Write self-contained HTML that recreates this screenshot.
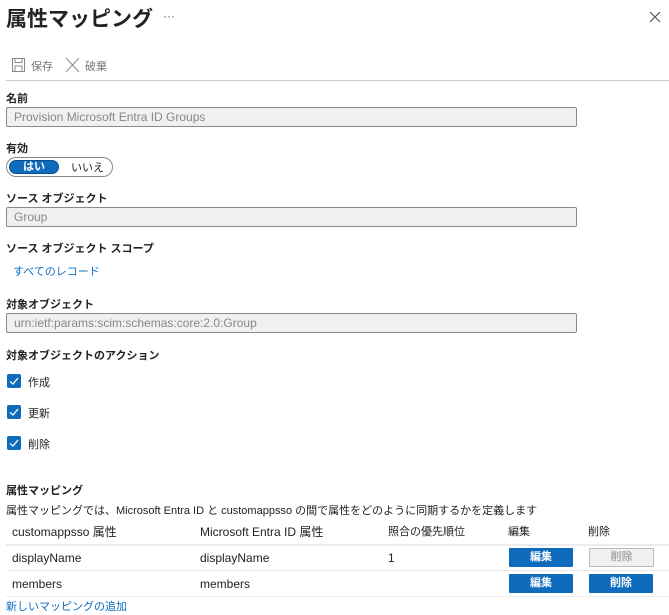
<!DOCTYPE html>
<html><head><meta charset="utf-8"><style>
body{margin:0;width:669px;height:615px;background:#fff;font-family:"Liberation Sans","Noto Sans CJK JP",sans-serif;color:#222;position:relative;overflow:hidden}
.a{position:absolute;white-space:nowrap}
.lab{font-size:11px;font-weight:bold;color:#222}
.inp{position:absolute;left:6px;width:562px;height:18px;border:1px solid #8a8a8a;background:#f0f0f0;border-radius:2px;font-size:12px;color:#888;line-height:18px;padding-left:7px;box-sizing:content-box}
.cb{position:absolute;left:7px;width:14px;height:14px;background:#0f6cbd;border-radius:2px}
.cb svg{display:block}
.btn{position:absolute;width:64px;height:19px;background:#0f6cbd;color:#fff;font-size:11px;font-weight:bold;text-align:center;line-height:19px;border-radius:1px}
.hl{position:absolute;left:6px;width:663px;height:1px;background:#ebebeb}
.t{font-size:12px}
</style></head><body>
<div class="a" style="left:6px;top:3px;font-size:21px;font-weight:bold">属性マッピング</div>
<div class="a" style="left:163px;top:9px;font-size:12px;color:#666">···</div>
<svg class="a" style="left:649px;top:11px" width="12" height="12"><path d="M1 1L11 11M11 1L1 11" stroke="#555" stroke-width="1.2"/></svg>
<svg class="a" style="left:12px;top:58px" width="13" height="14"><rect x="0.5" y="0.5" width="12" height="13" fill="none" stroke="#888"/><rect x="3" y="0.5" width="7" height="4" fill="none" stroke="#888"/><rect x="3" y="8" width="7" height="5.5" fill="none" stroke="#888"/></svg>
<div class="a" style="left:31px;top:58px;font-size:11px;color:#777">保存</div>
<svg class="a" style="left:66px;top:58px" width="13" height="14"><path d="M0 0L13 14M13 0L0 14" stroke="#888" stroke-width="1"/></svg>
<div class="a" style="left:85px;top:58px;font-size:11px;color:#777">破棄</div>
<div class="a" style="left:6px;top:80px;width:663px;height:1px;background:#ccc"></div>
<div class="a lab" style="left:6px;top:90px">名前</div>
<div class="inp" style="top:107px">Provision Microsoft Entra ID Groups</div>
<div class="a lab" style="left:6px;top:140px">有効</div>
<div class="a" style="left:6px;top:157px;width:105px;height:18px;border:1px solid #888;border-radius:10px"></div>
<div class="a" style="left:9px;top:160px;width:48px;height:12px;background:#0f6cbd;border:1px solid #0b4d8a;border-radius:7px;color:#fff;font-size:11px;font-weight:bold;text-align:center;line-height:12px">はい</div>
<div class="a" style="left:71px;top:159px;font-size:11px">いいえ</div>
<div class="a lab" style="left:6px;top:190px">ソース オブジェクト</div>
<div class="inp" style="top:207px">Group</div>
<div class="a lab" style="left:6px;top:240px">ソース オブジェクト スコープ</div>
<div class="a" style="left:13px;top:263px;font-size:11px;color:#0f6cbd">すべてのレコード</div>
<div class="a lab" style="left:6px;top:296px">対象オブジェクト</div>
<div class="inp" style="top:313px">urn:ietf:params:scim:schemas:core:2.0:Group</div>
<div class="a lab" style="left:6px;top:347px">対象オブジェクトのアクション</div>
<div class="cb" style="top:374px"><svg width="14" height="14"><path d="M3 7.5L6 10L11 4" stroke="#fff" stroke-width="1.3" fill="none"/></svg></div>
<div class="a" style="left:28px;top:374px;font-size:11px">作成</div>
<div class="cb" style="top:405px"><svg width="14" height="14"><path d="M3 7.5L6 10L11 4" stroke="#fff" stroke-width="1.3" fill="none"/></svg></div>
<div class="a" style="left:28px;top:405px;font-size:11px">更新</div>
<div class="cb" style="top:436px"><svg width="14" height="14"><path d="M3 7.5L6 10L11 4" stroke="#fff" stroke-width="1.3" fill="none"/></svg></div>
<div class="a" style="left:28px;top:436px;font-size:11px">削除</div>
<div class="a" style="left:6px;top:482px;font-size:11px;font-weight:bold">属性マッピング</div>
<div class="a" style="left:6px;top:502px;font-size:11px">属性マッピングでは、Microsoft Entra ID と customappsso の間で属性をどのように同期するかを定義します</div>
<div class="a t" style="left:12px;top:523px">customappsso 属性</div>
<div class="a t" style="left:200px;top:523px">Microsoft Entra ID 属性</div>
<div class="a" style="left:388px;top:523px;font-size:11px">照合の優先順位</div>
<div class="a" style="left:508px;top:523px;font-size:11px">編集</div>
<div class="a" style="left:588px;top:523px;font-size:11px">削除</div>
<div class="hl" style="top:544px;height:2px"></div>
<div class="a t" style="left:12px;top:551px">displayName</div>
<div class="a t" style="left:200px;top:551px">displayName</div>
<div class="a t" style="left:388px;top:551px">1</div>
<div class="btn" style="left:509px;top:548px">編集</div>
<div class="btn" style="left:589px;top:548px;background:#f0f0f0;color:#aaa;border:1px solid #bbb;width:63px;height:17px;line-height:17px">削除</div>
<div class="hl" style="top:570px"></div>
<div class="a t" style="left:12px;top:577px">members</div>
<div class="a t" style="left:200px;top:577px">members</div>
<div class="btn" style="left:509px;top:574px">編集</div>
<div class="btn" style="left:589px;top:574px">削除</div>
<div class="hl" style="top:596px"></div>
<div class="a" style="left:6px;top:598px;font-size:11px;color:#0f6cbd">新しいマッピングの追加</div>
</body></html>
